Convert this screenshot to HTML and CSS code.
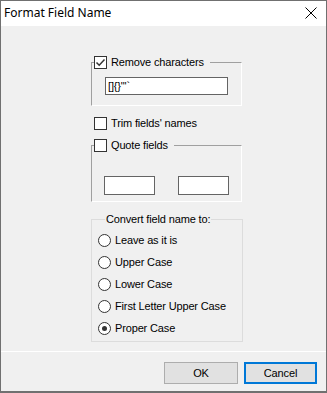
FILE: index.html
```html
<!DOCTYPE html>
<html lang="en">

<head>
    <meta charset="UTF-8">
    <meta name="viewport" content="width=device-width, initial-scale=1.0">
    <title>Format Field Name</title>
    <link rel="stylesheet" href="styles.css">
</head>

<body>

    <div class="window">
        <div class="titlebar">
            <span class="title">Format Field Name</span>
            <svg class="close" width="12" height="12" viewBox="0 0 12 12">
                <path d="M0.5 0.5 L11.5 11.5 M11.5 0.5 L0.5 11.5" stroke="#000" stroke-width="1" fill="none"/>
            </svg>
        </div>

        <div class="content">
            <fieldset class="group etched remove">
                <legend class="check-legend">
                    <span class="check-row">
                        <span class="checkbox">
                            <svg width="11" height="11" viewBox="0 0 11 11">
                                <path d="M1.5 5.5 L4.2 8.2 L9.5 2.5" stroke="#333" stroke-width="1.5" fill="none"/>
                            </svg>
                        </span>
                        <span class="label">Remove characters</span>
                    </span>
                </legend>
                <div class="textbox wide">[]{}"'`</div>
            </fieldset>

            <div class="check-row trim">
                <span class="checkbox"></span>
                <span class="label">Trim fields' names</span>
            </div>

            <fieldset class="group etched quote">
                <legend class="check-legend">
                    <span class="check-row">
                        <span class="checkbox"></span>
                        <span class="label">Quote fields</span>
                    </span>
                </legend>
                <div class="quote-boxes">
                    <div class="textbox small"></div>
                    <div class="textbox small"></div>
                </div>
            </fieldset>

            <fieldset class="group convert">
                <legend class="text-legend">Convert field name to:</legend>
                <div class="radios">
                    <div class="radio-row"><span class="radio"></span><span class="label">Leave as it is</span></div>
                    <div class="radio-row"><span class="radio"></span><span class="label">Upper Case</span></div>
                    <div class="radio-row"><span class="radio"></span><span class="label">Lower Case</span></div>
                    <div class="radio-row"><span class="radio"></span><span class="label">First Letter Upper Case</span></div>
                    <div class="radio-row"><span class="radio checked"></span><span class="label">Proper Case</span></div>
                </div>
            </fieldset>
        </div>

        <div class="footer">
            <button class="button">OK</button>
            <button class="button default">Cancel</button>
        </div>
    </div>

</body>

</html>
```
FILE: styles.css
```css
body {
    margin: 0;
    font-family: "Liberation Sans", Arial, sans-serif;
    font-size: 11px;
    letter-spacing: -0.15px;
    color: #000;
    background-color: #f0f0f0;
}

.window {
    width: 327px;
    height: 393px;
    box-sizing: border-box;
    border: 1px solid #707070;
    border-bottom-width: 2px;
    background-color: #f0f0f0;
    display: flex;
    flex-direction: column;
}

.titlebar {
    height: 25px;
    background-color: #fff;
    display: flex;
    align-items: center;
    justify-content: space-between;
    padding: 0 9px 0 3px;
    letter-spacing: 0;
}

.title {
    font-family: "Segoe UI", "Noto Sans", sans-serif;
    font-size: 12px;
    margin-top: -2px;
}

.close {
    display: block;
    margin-top: -1px;
}

.content {
    height: 325px;
    padding-left: 90px;
    box-sizing: border-box;
}

.group {
    margin: 0;
    padding: 0;
    min-width: 0;
    box-sizing: border-box;
}

.etched {
    width: 151px;
    border-style: solid;
    border-width: 1px;
    border-color: #a0a0a0 #fff #fff #a0a0a0;
}

.check-legend {
    padding: 0 6px 0 0;
    margin-left: 2px;
}

.check-row {
    display: flex;
    align-items: center;
    height: 13px;
    line-height: 13px;
}

.checkbox {
    width: 13px;
    height: 13px;
    box-sizing: border-box;
    border: 1px solid #333;
    background-color: #fff;
    flex-shrink: 0;
}

.checkbox svg {
    display: block;
}

.check-row .label {
    margin-left: 4px;
}

.remove {
    margin-top: 30px;
    padding: 8px 0 10px 0;
}

.textbox {
    box-sizing: border-box;
    border: 1px solid #646464;
    background-color: #fff;
    line-height: 16px;
    padding-left: 2px;
}

.textbox.wide {
    margin-left: 13px;
    width: 123px;
    height: 18px;
}

.trim {
    margin-top: 11px;
    margin-left: 3px;
}

.quote {
    margin-top: 9px;
    padding: 24px 0 6px 0;
}

.quote-boxes {
    display: flex;
    gap: 23px;
    margin-left: 12px;
}

.textbox.small {
    width: 51px;
    height: 19px;
}

.convert {
    width: 152px;
    margin-top: 11px;
    border: 1px solid #dcdcdc;
    padding: 8px 0 6px 6px;
}

.text-legend {
    padding: 0 1px;
    margin-left: 7px;
    line-height: 13px;
}

.radios {
    display: flex;
    flex-direction: column;
    gap: 9px;
}

.radio-row {
    display: flex;
    align-items: center;
    height: 13px;
    line-height: 13px;
}

.radio {
    width: 13px;
    height: 13px;
    box-sizing: border-box;
    border: 1px solid #333;
    border-radius: 50%;
    background-color: #fff;
    display: flex;
    align-items: center;
    justify-content: center;
}

.radio.checked::after {
    content: "";
    width: 5px;
    height: 5px;
    border-radius: 50%;
    background-color: #333;
}

.radio-row .label {
    margin-left: 4px;
}

.footer {
    flex: 1;
    border-top: 1px solid #fff;
    display: flex;
    justify-content: flex-end;
    align-items: flex-start;
    gap: 6px;
    padding: 10px 9px 0 0;
}

.button {
    width: 74px;
    height: 22px;
    font-family: "Liberation Sans", Arial, sans-serif;
    font-size: 11px;
    letter-spacing: -0.15px;
    color: #000;
    background-color: #e1e1e1;
    border: 1px solid #adadad;
    padding: 0;
}

.button.default {
    width: 73px;
    border: 2px solid #0078d7;
}
```
